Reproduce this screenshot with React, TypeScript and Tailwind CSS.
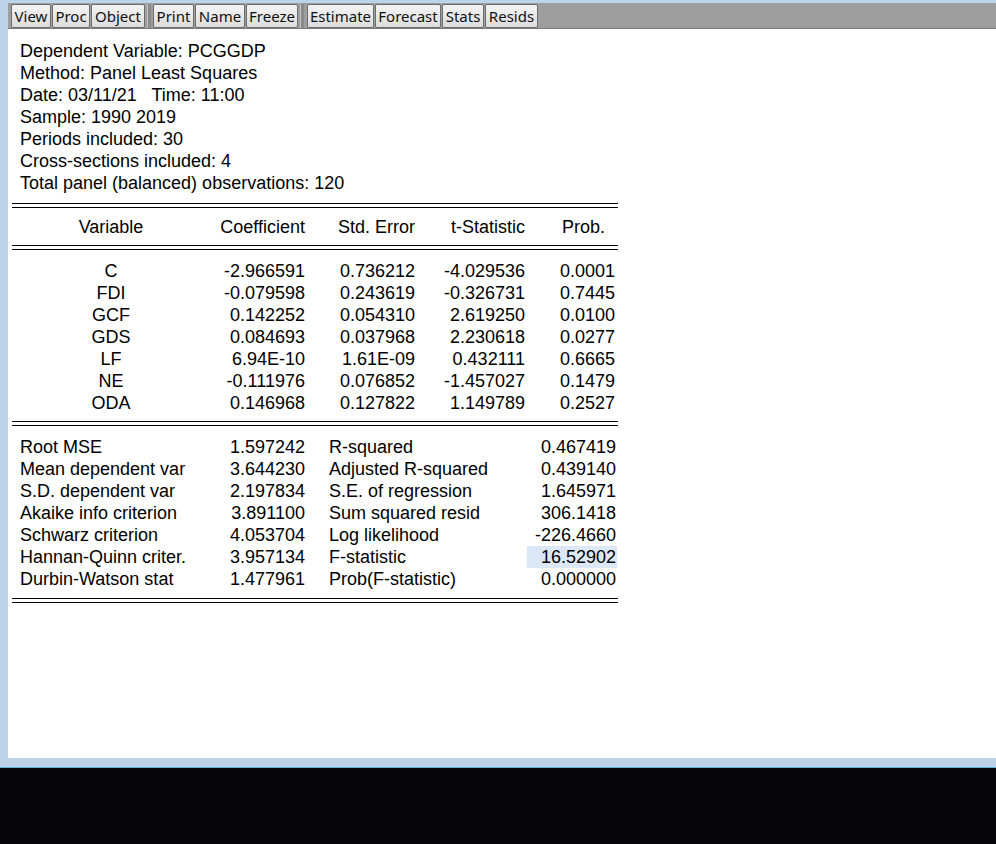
import React from "react";

const font = { fontFamily: '"Liberation Sans", Arial, sans-serif' };

function Btn({ label, w }: { label: string; w: string }) {
  return (
    <div
      className={`${w} h-[24px] flex items-center justify-center rounded-[2px] border border-[#6e6e6e] bg-gradient-to-b from-[#f4f4f4] to-[#dcdcdc] text-[15px] text-[#111] leading-none`}
      style={{ fontFamily: '"Noto Sans", "Open Sans", sans-serif' }}
    >
      {label}
    </div>
  );
}

function Sep({ ml, mr }: { ml: string; mr: string }) {
  return <div className={`${ml} ${mr} w-[4px] h-[24px] bg-[#8a8a8a] border-l border-[#c4c4c4]`} />;
}

function DoubleLine() {
  return <div className="h-[5px] border-t border-b border-black w-[606px]" />;
}

const coefRows = [
  ["C", "-2.966591", "0.736212", "-4.029536", "0.0001"],
  ["FDI", "-0.079598", "0.243619", "-0.326731", "0.7445"],
  ["GCF", "0.142252", "0.054310", "2.619250", "0.0100"],
  ["GDS", "0.084693", "0.037968", "2.230618", "0.0277"],
  ["LF", "6.94E-10", "1.61E-09", "0.432111", "0.6665"],
  ["NE", "-0.111976", "0.076852", "-1.457027", "0.1479"],
  ["ODA", "0.146968", "0.127822", "1.149789", "0.2527"],
];

const statRows = [
  ["Root MSE", "1.597242", "R-squared", "0.467419"],
  ["Mean dependent var", "3.644230", "Adjusted R-squared", "0.439140"],
  ["S.D. dependent var", "2.197834", "S.E. of regression", "1.645971"],
  ["Akaike info criterion", "3.891100", "Sum squared resid", "306.1418"],
  ["Schwarz criterion", "4.053704", "Log likelihood", "-226.4660"],
  ["Hannan-Quinn criter.", "3.957134", "F-statistic", "16.52902"],
  ["Durbin-Watson stat", "1.477961", "Prob(F-statistic)", "0.000000"],
];

export default function App() {
  return (
    <div className="w-[996px] h-[844px] flex flex-col bg-[#060608] overflow-hidden">
      <div className="h-[767px] bg-[#bdd3ea] flex flex-col pl-[8px] pt-[3px] pb-[9px]">
        <div className="h-[26px] bg-[#9e9e9e] border-b border-[#7a7a7a] flex items-start pt-[1px] pl-[3px]">
          <div className="flex gap-[1px]">
            <Btn label="View" w="w-[40px]" />
            <Btn label="Proc" w="w-[38px]" />
            <Btn label="Object" w="w-[54px]" />
          </div>
          <Sep ml="ml-[2px]" mr="mr-[2px]" />
          <div className="flex gap-[1px]">
            <Btn label="Print" w="w-[41px]" />
            <Btn label="Name" w="w-[50px]" />
            <Btn label="Freeze" w="w-[52px]" />
          </div>
          <Sep ml="ml-[2px]" mr="mr-[3px]" />
          <div className="flex gap-[1px]">
            <Btn label="Estimate" w="w-[67px]" />
            <Btn label="Forecast" w="w-[66px]" />
            <Btn label="Stats" w="w-[42px]" />
            <Btn label="Resids" w="w-[53px]" />
          </div>
        </div>
        <div className="flex-1 bg-white pt-[10px] pl-[4px] text-[18px] leading-[22px] text-black" style={font}>
          <div className="pl-[8px] pt-[1px]">
            <div>Dependent Variable: PCGGDP</div>
            <div>Method: Panel Least Squares</div>
            <div className="whitespace-pre">Date: 03/11/21   Time: 11:00</div>
            <div>Sample: 1990 2019</div>
            <div>Periods included: 30</div>
            <div>Cross-sections included: 4</div>
            <div>Total panel (balanced) observations: 120</div>
          </div>
          <div className="mt-[9px]">
            <DoubleLine />
            <div className="flex h-[37px] items-center w-[606px]">
              <div className="w-[198px] text-center">Variable</div>
              <div className="w-[95px] text-right">Coefficient</div>
              <div className="w-[110px] text-right">Std. Error</div>
              <div className="w-[110px] text-right">t-Statistic</div>
              <div className="w-[93px] text-right pr-[13px]">Prob.</div>
            </div>
            <DoubleLine />
            <div className="pt-[10px] pb-[7px]">
              {coefRows.map((r) => (
                <div key={r[0]} className="flex h-[22px] items-center w-[606px]">
                  <div className="w-[198px] text-center">{r[0]}</div>
                  <div className="w-[95px] text-right">{r[1]}</div>
                  <div className="w-[110px] text-right">{r[2]}</div>
                  <div className="w-[110px] text-right">{r[3]}</div>
                  <div className="w-[93px] text-right pr-[3px]">{r[4]}</div>
                </div>
              ))}
            </div>
            <DoubleLine />
            <div className="pt-[10px] pb-[8px]">
              {statRows.map((r) => (
                <div key={r[0]} className="flex h-[22px] items-center w-[606px]">
                  <div className="w-[293px] flex justify-between pl-[8px]">
                    <span>{r[0]}</span>
                    <span>{r[1]}</span>
                  </div>
                  <div className="w-[24px]" />
                  <div className="w-[198px]">{r[2]}</div>
                  <div
                    className={`w-[90px] h-[22px] flex items-center justify-end pr-[1px] ${
                      r[2] === "F-statistic" ? "bg-[#dce8f7]" : ""
                    }`}
                  >
                    {r[3]}
                  </div>
                </div>
              ))}
            </div>
            <DoubleLine />
          </div>
        </div>
      </div>
      <div className="h-px bg-[#5ab4d6]" />
    </div>
  );
}
